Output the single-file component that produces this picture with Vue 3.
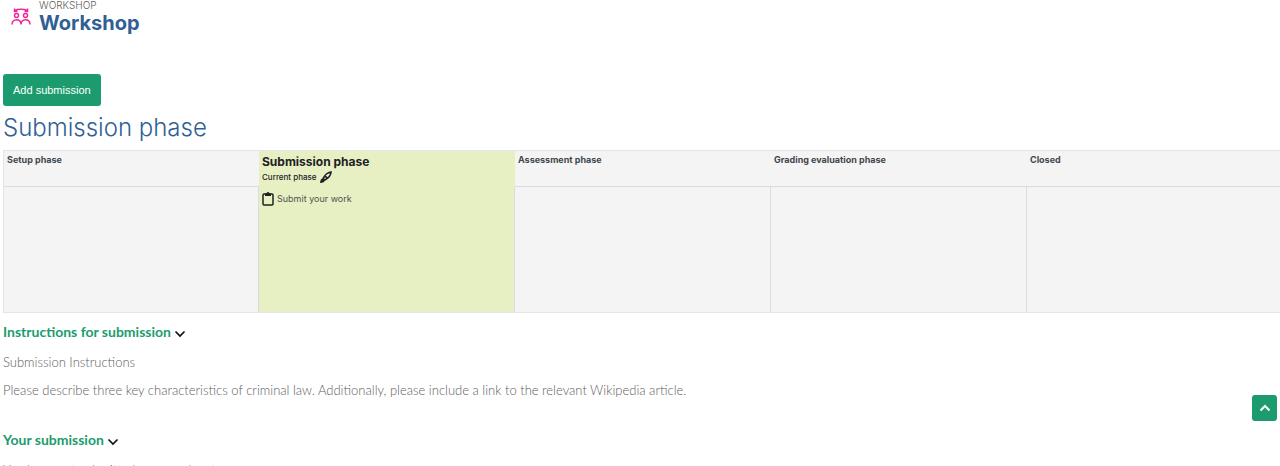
<script setup>
import { ref } from 'vue'

const phases = [
  { title: 'Setup phase' },
  { title: 'Submission phase', active: true, tasks: ['Submit your work'] },
  { title: 'Assessment phase' },
  { title: 'Grading evaluation phase' },
  { title: 'Closed' }
]

const sections = ref([
  {
    title: 'Instructions for submission',
    open: true,
    text: [
      'Submission Instructions',
      'Please describe three key characteristics of criminal law. Additionally, please include a link to the relevant Wikipedia article.'
    ]
  },
  { title: 'Your submission', open: true, text: ['You have not submitted your work yet'] }
])

function toTop() {
  window.scrollTo({ top: 0, behavior: 'smooth' })
}
</script>

<template>
  <main class="workshop">
    <header class="activity">
      <svg class="activity-icon" viewBox="0 0 20 20" aria-hidden="true">
        <path d="M4 3.500C7 1.800 13 1.800 16 3.500M3.500 1.500v3h3M16.500 1.500v3h-3" />
        <circle cx="5.500" cy="8.500" r="2" />
        <circle cx="14.500" cy="8.500" r="2" />
        <path d="M1 17.500c0-3 1.800-4.800 4.500-4.800s4.500 1.800 4.500 4.800c0-3 1.800-4.800 4.500-4.800s4.500 1.800 4.500 4.800" />
      </svg>
      <div>
        <div class="activity-type">WORKSHOP</div>
        <h1>Workshop</h1>
      </div>
    </header>

    <button class="btn add" type="button">Add submission</button>

    <h2>Submission phase</h2>

    <div class="plan">
      <section v-for="p in phases" :key="p.title" class="phase" :class="{ active: p.active }">
        <div class="phase-head">
          <h3>{{ p.title }}</h3>
          <div v-if="p.active" class="current">
            <span>Current phase</span>
            <svg class="brush" viewBox="0 0 12 12" aria-hidden="true">
              <path class="fill" d="M0 12c.3-2.800 1-4.500 2.800-4.500L4.800 9.500C4.600 11 3 11.700 0 12z" />
              <path d="M3.200 7.300C5 3.500 8 1.500 11 1c0 3-2.500 6-6.300 8zM4.800 4.800l2.800 2.600" />
            </svg>
          </div>
        </div>
        <ul class="tasks">
          <li v-for="t in p.tasks" :key="t">
            <svg class="clipboard" viewBox="0 0 12 14" aria-hidden="true">
              <rect x="1" y="2" width="10" height="11" rx="1" />
              <path class="fill" d="M3 1.500h1.500a1.500 1.500 0 0 1 3 0H9v2.500H3z" />
            </svg>
            <span>{{ t }}</span>
          </li>
        </ul>
      </section>
    </div>

    <section v-for="s in sections" :key="s.title" class="block">
      <button class="toggle" type="button" :aria-expanded="s.open" @click="s.open = !s.open">
        <span>{{ s.title }}</span>
        <svg class="chevron" viewBox="0 0 12 8" aria-hidden="true"><path d="M1.500 1.500L6 6l4.500-4.500" /></svg>
      </button>
      <div v-if="s.open" class="block-text">
        <p v-for="line in s.text" :key="line">{{ line }}</p>
      </div>
    </section>

    <button class="btn to-top" type="button" aria-label="Back to top" @click="toTop">
      <svg viewBox="0 0 12 8" aria-hidden="true"><path d="M1.500 6.500L6 2l4.500 4.500" /></svg>
    </button>
  </main>
</template>

<style>
body {
  background: #fff;
  overflow-x: hidden;
}
body::-webkit-scrollbar { display: none; }
</style>

<style scoped>
.workshop {
  padding-left: 3px;
  overflow-x: hidden;
  font-family: "Century Gothic", Inter, sans-serif;
  font-size: 12px;
  line-height: 16px;
  color: #606060;
}
h1, h2, h3, p, ul { margin: 0; padding: 0; }
svg {
  fill: none;
  stroke: currentColor;
  stroke-width: 2;
}
.fill { fill: currentColor; stroke: none; }

.activity {
  display: flex;
  gap: 8px;
  padding-left: 8px;
  height: 74px;
}
.activity-icon {
  width: 20px;
  height: 20px;
  margin-top: 7px;
  color: #f0249b;
  stroke-width: 1.5;
}
.activity-type {
  font-size: 10px;
  line-height: 10px;
  font-weight: 300;
}
h1 {
  font-size: 20px;
  line-height: 26px;
  font-weight: 700;
  color: #2f5f95;
}

.btn {
  border: 0;
  border-radius: 3px;
  background: #1c9c6e;
  color: #fff;
}
.add {
  display: block;
  height: 32px;
  padding: 0 10px;
  font: 11px/16px "Liberation Sans", Arial, sans-serif;
}
h2 {
  padding: 6px 0;
  font-size: 24px;
  line-height: 32px;
  font-weight: 300;
  color: #2f5f95;
}

.plan {
  display: grid;
  grid-template-columns: repeat(5, 20vw);
  border: solid #e3e5e8;
  border-width: 1px 0;
  background: #f4f4f4;
}
.phase {
  display: flex;
  flex-direction: column;
  min-height: 161px;
}
.phase:first-child { border-left: 1px solid #e3e5e8; }
.phase-head {
  box-sizing: border-box;
  height: 36px;
  padding: 1px 3px;
  border-bottom: 1px solid #d8dbe2;
}
h3 {
  font-size: 9px;
  line-height: 16px;
  font-weight: 700;
  color: #40484f;
}
.tasks {
  flex: 1;
  border-right: 1px solid #d8dbe2;
  list-style: none;
}
.active {
  background: #e7f0c3;
  color: #1d2125;
}
.active .phase-head {
  padding: 3px;
  border-bottom: 0;
}
.active h3 {
  font-size: 12px;
  color: #1d2125;
}
.current {
  display: flex;
  align-items: center;
  gap: 3px;
  font-size: 8px;
  line-height: 14px;
  font-weight: 500;
}
.brush {
  width: 12px;
  height: 12px;
  stroke-width: 1.6;
}
.tasks li {
  display: flex;
  align-items: center;
  gap: 3px;
  padding: 4px 3px;
  font-size: 9px;
}
.clipboard {
  width: 12px;
  height: 14px;
  stroke-width: 1.5;
}
.tasks span { color: #505050; }

.toggle {
  display: flex;
  align-items: center;
  gap: 3px;
  padding: 0;
  border: 0;
  background: none;
  font: 700 14px/20px "Century Gothic", Lato, sans-serif;
  color: #1c9c6e;
}
.chevron {
  width: 12px;
  height: 8px;
  margin-top: 3px;
  color: #111;
  stroke-width: 1.7;
}
.block { padding-top: 9px; }
.block-text {
  padding: 12px 0 11px;
  font-family: "Century Gothic", Lato, sans-serif;
  font-size: 13px;
  font-weight: 300;
}
.block-text p { padding-bottom: 12px; }

.to-top {
  position: fixed;
  right: 3px;
  bottom: 45px;
  display: flex;
  align-items: center;
  justify-content: center;
  width: 25px;
  height: 26px;
  padding: 0;
}
.to-top svg { width: 12px; height: 8px; }
</style>
